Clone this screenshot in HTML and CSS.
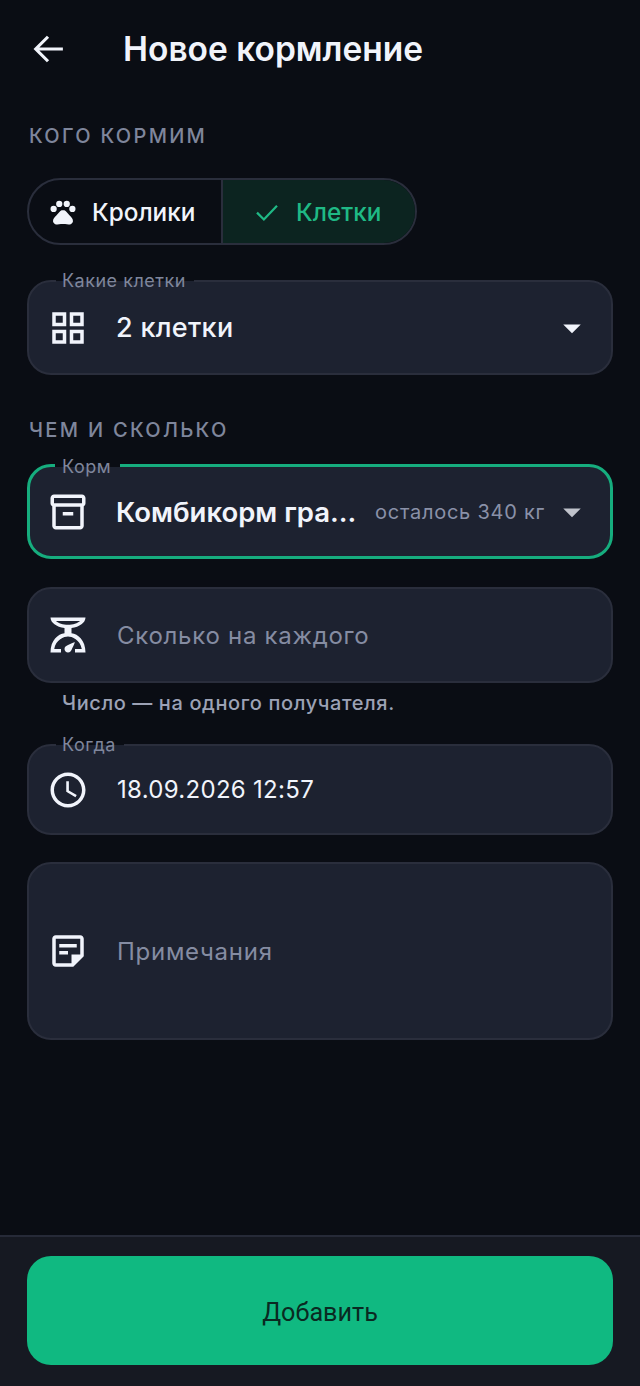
FILE: index.html
```html
<!DOCTYPE html>
<html lang="ru">
<head>
<meta charset="utf-8">
<title>Новое кормление</title>
<link rel="stylesheet" href="styles.css">
</head>
<body>
<div class="screen">
  <header class="topbar">
    <svg class="back" viewBox="0 0 24 24"><path d="M20.5 12H5M12 5l-7 7 7 7"/></svg>
    <h1>Новое кормление</h1>
  </header>
  <main class="form">
    <h2 class="section first">КОГО КОРМИМ</h2>
    <div class="segments">
      <div class="seg">
        <svg class="icon paw" viewBox="0 0 24 24"><circle cx="4.5" cy="9.5" r="2.5"/><circle cx="9" cy="5.5" r="2.5"/><circle cx="15" cy="5.5" r="2.5"/><circle cx="19.5" cy="9.5" r="2.5"/><path d="M17.34 14.86c-.87-1.02-1.6-1.89-2.48-2.91-.46-.54-1.05-1.08-1.75-1.32-.11-.04-.22-.07-.33-.09-.25-.04-.52-.04-.78-.04s-.53 0-.79.05c-.11.02-.22.05-.33.09-.7.24-1.28.78-1.75 1.32-.87 1.02-1.6 1.89-2.48 2.91-1.31 1.31-2.92 2.76-2.62 4.79.29 1.02 1.02 2.03 2.33 2.32.73.15 3.06-.44 5.54-.44h.18c2.48 0 4.81.58 5.54.44 1.31-.29 2.04-1.31 2.33-2.32.31-2.04-1.3-3.49-2.61-4.8z"/></svg>
        <span>Кролики</span>
      </div>
      <div class="seg seg-on">
        <svg class="check" viewBox="0 0 24 24"><path d="M4 12.5l5.5 5.5L20 7"/></svg>
        <span>Клетки</span>
      </div>
    </div>

    <div class="field f-cages">
      <label class="tag">Какие клетки</label>
      <svg class="icon" viewBox="0 0 24 24"><path d="M3 3v8h8V3H3zm6 6H5V5h4v4zm-6 4v8h8v-8H3zm6 6H5v-4h4v4zm4-16v8h8V3h-8zm6 6h-4V5h4v4zm-6 4v8h8v-8h-8zm6 6h-4v-4h4v4z"/></svg>
      <span class="value">2 клетки</span>
      <svg class="icon drop" viewBox="0 0 24 24"><path d="M7 10l5 5 5-5z"/></svg>
    </div>

    <h2 class="section second">ЧЕМ И СКОЛЬКО</h2>
    <div class="field f-feed">
      <label class="tag">Корм</label>
      <svg class="icon" viewBox="0 0 24 24"><path d="M20 2H4c-1 0-2 .9-2 2v3.01c0 .72.43 1.34 1 1.69V20c0 1.1 1.1 2 2 2h14c.9 0 2-.9 2-2V8.7c.57-.35 1-.97 1-1.69V4c0-1.1-1-2-2-2zm-1 18H5V9h14v11zm1-13H4V4h16v3zM9 12h6v2H9z"/></svg>
      <span class="value strong">Комбикорм гра...</span>
      <span class="stock">осталось 340 кг</span>
      <svg class="icon drop dim" viewBox="0 0 24 24"><path d="M7 10l5 5 5-5z"/></svg>
    </div>

    <div class="field f-amount">
      <svg class="icon" viewBox="0 0 24 24"><path fill-rule="evenodd" d="M14 11V8c4.56-.58 8-3.1 8-6H2c0 2.9 3.44 5.42 8 6v3c-3.68.46-8 3.9-8 11h6v-2H4.13c.93-5.5 5.65-7.2 7.87-7.2s6.94 1.7 7.87 7.2H16v2h6c0-7.1-4.32-10.54-8-11zM12 6.2c-2.8 0-5.5-1-6.9-2.2h13.8c-1.4 1.2-4.1 2.2-6.9 2.2z"/><path d="M12 22c-1.1 0-2-.9-2-2 0-.55.22-1.05.59-1.41C11.39 17.79 16 16 16 16s-1.79 4.61-2.59 5.41c-.36.37-.86.59-1.41.59z"/></svg>
      <span class="placeholder">Сколько на каждого</span>
    </div>
    <p class="hint">Число — на одного получателя.</p>

    <div class="field f-when">
      <label class="tag">Когда</label>
      <svg class="icon" viewBox="0 0 24 24"><path d="M11.99 2C6.47 2 2 6.48 2 12s4.47 10 9.99 10C17.52 22 22 17.52 22 12S17.52 2 11.99 2zM12 20c-4.42 0-8-3.58-8-8s3.58-8 8-8 8 3.58 8 8-3.58 8-8 8zm.5-13H11v6l5.25 3.15.75-1.23-4.5-2.67z"/></svg>
      <span class="value date">18.09.2026 12:57</span>
    </div>

    <div class="field f-notes">
      <svg class="icon" viewBox="0 0 24 24"><path d="M19 5v9h-5v5H5V5h14m0-2H5C3.9 3 3 3.9 3 5v14c0 1.1.9 2 2 2h10l6-6V5c0-1.1-.9-2-2-2zm-7 11H7v-2h5v2zm5-4H7V8h10v2z"/></svg>
      <span class="placeholder">Примечания</span>
    </div>
  </main>
  <footer class="bottom">
    <button class="submit" type="button">Добавить</button>
  </footer>
</div>
</body>
</html>
```

FILE: styles.css
```css
* { box-sizing: border-box; }
html, body { margin: 0; height: 100%; }
body {
  background: #0a0d14;
  color: #f1f4fb;
  font-family: Inter, "Noto Sans", sans-serif;
}
.screen {
  height: 1386px;
  display: flex;
  flex-direction: column;
  overflow: hidden;
}
.topbar {
  height: 98px;
  padding-left: 27px;
  display: flex;
  align-items: center;
}
.back {
  width: 42px;
  height: 42px;
  fill: none;
  stroke: #f1f4fb;
  stroke-width: 1.8;
}
h1 {
  margin: 0 0 0 54px;
  font-size: 33.5px;
  font-weight: 600;
  line-height: 40px;
}
.form {
  flex: 1;
  padding: 0 27px;
}
.section {
  margin: 0;
  padding-left: 2px;
  font-size: 20px;
  font-weight: 500;
  line-height: 26px;
  letter-spacing: 2.3px;
  color: #7f869c;
}
.section.first { margin-top: 25px; }
.section.second { margin-top: 42px; }
.segments {
  margin-top: 29px;
  width: 390px;
  height: 67px;
  display: flex;
  border: 2px solid #2a2e3c;
  border-radius: 34px;
  overflow: hidden;
}
.seg {
  width: 192px;
  display: flex;
  align-items: center;
  padding-left: 19px;
  gap: 14px;
  font-size: 24.3px;
  font-weight: 500;
}
.seg-on {
  flex: 1;
  border-left: 2px solid #2a2e3c;
  background: #0c2420;
  color: #1fb985;
  padding-left: 29px;
  gap: 14px;
}
.check {
  width: 30px;
  height: 30px;
  fill: none;
  stroke: #1fb985;
  stroke-width: 1.8;
}
.field {
  position: relative;
  display: flex;
  align-items: center;
  padding: 0 18px;
  background: #1d2230;
  border: 2px solid #2a2e3c;
  border-radius: 24px;
}
.f-cages { margin-top: 35px; height: 95px; }
.f-feed {
  margin-top: 21px;
  height: 95px;
  border: 3px solid #16ad7e;
  padding-left: 17px;
  padding-right: 17px;
}
.f-amount { margin-top: 28px; height: 96px; }
.f-when { margin-top: 28px; height: 91px; }
.f-notes { margin-top: 27px; height: 178px; }
.tag {
  position: absolute;
  left: 27px;
  top: -13px;
  padding: 0 8px 0 6px;
  font-size: 18px;
  line-height: 24px;
  letter-spacing: .5px;
  color: #7f869c;
  background: linear-gradient(#0a0d14 0 12px, #1d2230 12px);
}
.f-feed .tag { left: 25px; top: -12px; padding: 0 9px 0 7px; }
.icon {
  flex: none;
  width: 42px;
  height: 42px;
  fill: #f1f4fb;
}
.paw { width: 30px; height: 30px; }
.drop { margin-left: auto; }
.dim { fill: #c0c3cb; margin-left: 6px; }
.value {
  margin-left: 27px;
  font-size: 27px;
  font-weight: 500;
  letter-spacing: .3px;
}
.strong {
  flex: 1;
  min-width: 0;
  font-size: 27.5px;
  font-weight: 600;
  letter-spacing: 0;
  white-space: nowrap;
}
.stock {
  flex: none;
  margin-left: 12px;
  font-size: 20px;
  letter-spacing: .75px;
  color: #8a91a8;
}
.date {
  margin-left: 28px;
  font-size: 24px;
  font-weight: 400;
}
.placeholder {
  margin-left: 28px;
  font-size: 24px;
  letter-spacing: .72px;
  color: #858ca2;
}
.hint {
  margin: 7px 0 0 35px;
  font-size: 20px;
  font-weight: 500;
  line-height: 26px;
  letter-spacing: .6px;
  color: #9ca2b5;
  height: 26px;
}
.bottom {
  height: 151px;
  padding: 19px 27px 20px;
  background: #161922;
  border-top: 2px solid #262a38;
}
.submit {
  display: block;
  width: 100%;
  height: 109px;
  padding-top: 4px;
  border: 0;
  border-radius: 24px;
  background: #10b981;
  color: #0a2a22;
  font-family: Roboto, sans-serif;
  font-size: 25.2px;
  font-weight: 400;
}
```
